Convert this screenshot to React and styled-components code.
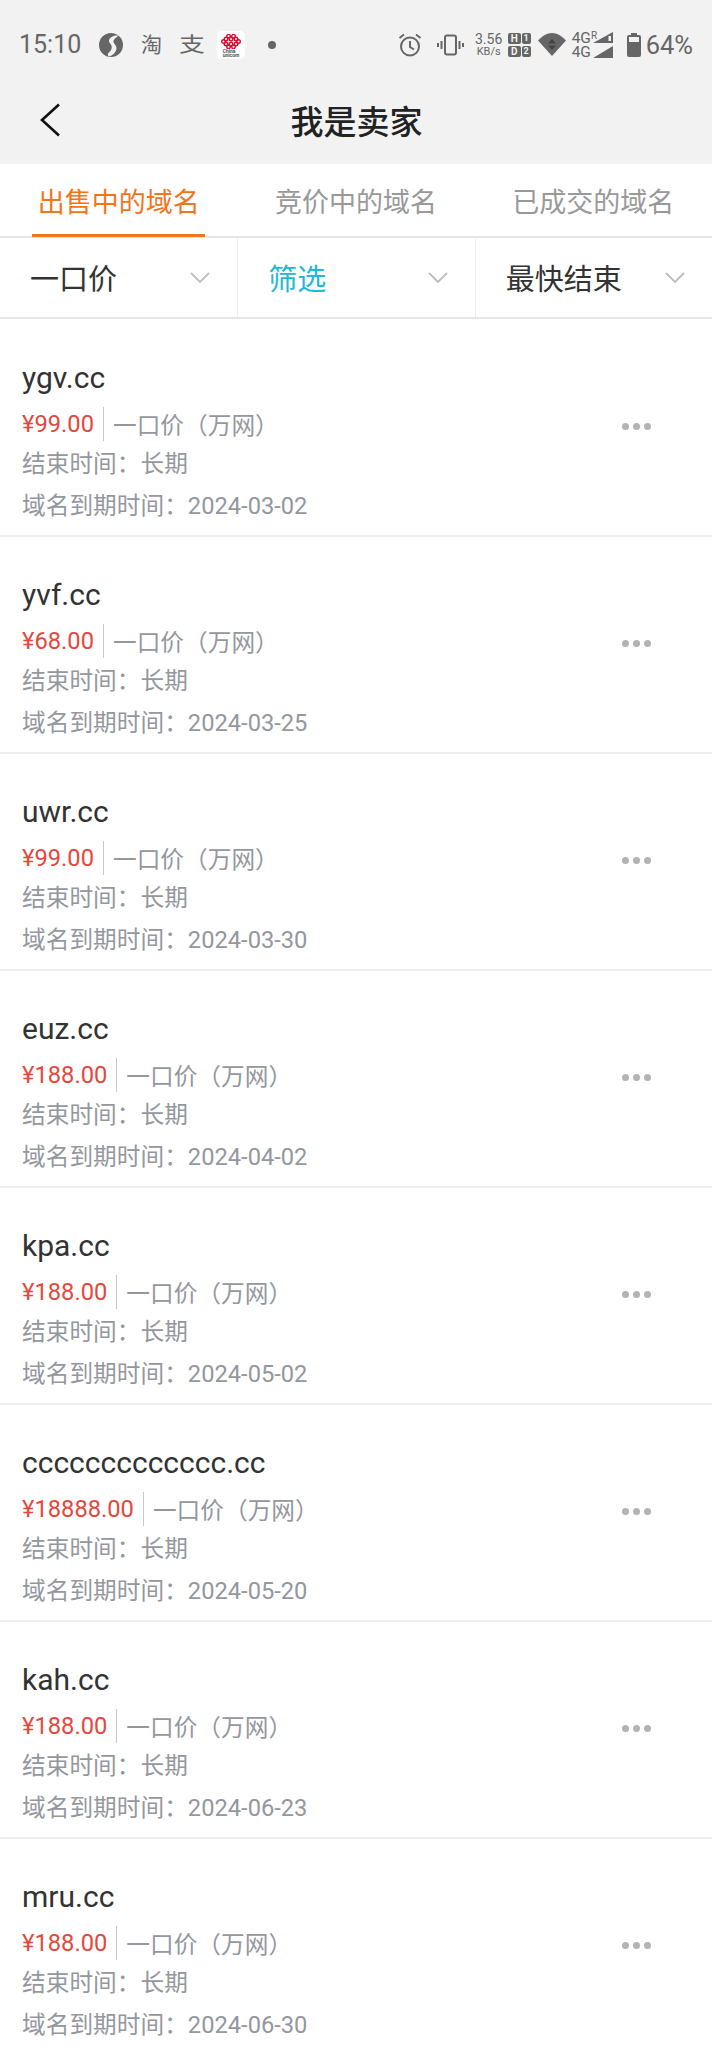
import styled, { createGlobalStyle } from "styled-components";

const domains = [
    { name: "ygv.cc", price: "¥99.00", end: "2024-03-02" },
    { name: "yvf.cc", price: "¥68.00", end: "2024-03-25" },
    { name: "uwr.cc", price: "¥99.00", end: "2024-03-30" },
    { name: "euz.cc", price: "¥188.00", end: "2024-04-02" },
    { name: "kpa.cc", price: "¥188.00", end: "2024-05-02" },
    { name: "ccccccccccccc.cc", price: "¥18888.00", end: "2024-05-20" },
    { name: "kah.cc", price: "¥188.00", end: "2024-06-23" },
    { name: "mru.cc", price: "¥188.00", end: "2024-06-30" },
];

const tabs = ["出售中的域名", "竞价中的域名", "已成交的域名"];

const filters = [
    { label: "一口价", left: 30 },
    { label: "筛选", left: 30, active: true },
    { label: "最快结束", left: 30 },
];

function Unicom() {
    const knots = [
        [7.5, 2.2], [12.5, 2.2],
        [5, 5], [10, 5], [15, 5],
        [2.5, 7.5], [17.5, 7.5],
        [5, 10], [10, 10], [15, 10],
        [7.5, 12.8], [12.5, 12.8],
    ];
    return (
        <UnicomBox>
            <svg width="20" height="15" viewBox="0 0 20 15">
                {knots.map(([x, y]) => (
                    <circle key={x + "-" + y} cx={x} cy={y} r="1.8" fill="none" stroke="#e0082d" strokeWidth="1.4" />
                ))}
            </svg>
            <UnicomText>China<br />unicom</UnicomText>
        </UnicomBox>
    );
}

function StatusBar() {
    return (
        <Status>
            <Time>15:10</Time>
            <IconSlot $left={18}>
                <svg width="24" height="24" viewBox="0 0 24 24">
                    <circle cx="12" cy="12" r="12" fill="#666" />
                    <path d="M20 2.500C15 2 11 4 10 7c-.6 2 1.500 3.500 2.500 5.500 1 2.500-.5 5.500-3 7.500-1 .8-1 2.500.5 3.500 3.500-1 7-4 7.500-8 .3-3-2.500-4.500-3-6.500-.4-2 2-4.500 5.500-6.500z" fill="#f2f2f2" />
                </svg>
            </IconSlot>
            <GlyphIcon $left={18} $size={21}>淘</GlyphIcon>
            <StretchedGlyph $left={17} $size={26}>支</StretchedGlyph>
            <IconSlot $left={12}><Unicom /></IconSlot>
            <Dot />
            <Spacer />
            <svg width="24" height="24" viewBox="0 0 24 24" fill="none" stroke="#666" strokeWidth="2">
                <circle cx="12" cy="13.500" r="9" />
                <path d="M12 8v6l4 2.500M1.500 5L6 1.500M22.500 5L18 1.500" />
            </svg>
            <IconSlot $left={15}>
                <svg width="27" height="22" viewBox="0 0 27 22" fill="none" stroke="#666" strokeWidth="2">
                    <rect x="8" y="1.500" width="11" height="19" rx="2" />
                    <path d="M4.500 7v8M22.500 7v8M1 9v4M26 9v4" />
                </svg>
            </IconSlot>
            <Speed>
                <span>3.56</span>
                <SpeedUnit>KB/s</SpeedUnit>
            </Speed>
            <IconSlot $left={5}>
                <SimGrid>
                    <SimCell $wide>H</SimCell>
                    <SimCell>1</SimCell>
                    <SimCell $wide>D</SimCell>
                    <SimCell>2</SimCell>
                </SimGrid>
            </IconSlot>
            <IconSlot $left={7}>
                <svg width="28" height="23" viewBox="0 0 28 23">
                    <path d="M0 7.500C4 3 9 0 14 0s10 3 14 7.500L14 23z" fill="#666" />
                    <path d="M14 6l-4 4.500h8zM14 17l-4-4.500h8z" fill="#444" />
                </svg>
            </IconSlot>
            <Network>
                <NetLine>4G<NetRoam>R</NetRoam></NetLine>
                <NetLine>4G</NetLine>
                <SignalBars width="22" height="27" viewBox="0 0 22 27">
                    <path d="M21 1v11H1z M19 5h-2.500v5H19z" fill="#666" fillRule="evenodd" />
                    <path d="M21 15v12H1z" fill="#666" />
                </SignalBars>
            </Network>
            <IconSlot $left={13}>
                <svg width="14" height="24" viewBox="0 0 14 24">
                    <path d="M4 0h6v2h2a2 2 0 0 1 2 2v18a2 2 0 0 1-2 2H2a2 2 0 0 1-2-2V4a2 2 0 0 1 2-2h2z" fill="#666" />
                    <rect x="2" y="4" width="10" height="5" fill="#f2f2f2" />
                </svg>
            </IconSlot>
            <Battery>64%</Battery>
        </Status>
    );
}

function App() {
    return (
        <Page>
            <GlobalStyle />
            <Header>
                <StatusBar />
                <Nav>
                    <BackButton>
                        <svg width="22" height="34" viewBox="0 0 22 34" fill="none" stroke="#111" strokeWidth="2.600">
                            <path d="M20 1.500L3 17l17 15.500" />
                        </svg>
                    </BackButton>
                    <Title>我是卖家</Title>
                </Nav>
            </Header>
            <Tabs>
                {tabs.map((tab, i) => (
                    <Tab key={tab} $active={i === 0}>{tab}</Tab>
                ))}
            </Tabs>
            <Filters>
                {filters.map((filter) => (
                    <Filter key={filter.label}>
                        <FilterLabel $active={filter.active} $left={filter.left}>{filter.label}</FilterLabel>
                        <svg width="20" height="12" viewBox="0 0 20 12" fill="none" stroke="#bdbdbd" strokeWidth="1.800">
                            <path d="M1 1l9 9 9-9" />
                        </svg>
                    </Filter>
                ))}
            </Filters>
            <List>
                {domains.map((item) => (
                    <Row key={item.name}>
                        <Info>
                            <DomainName>{item.name}</DomainName>
                            <PriceLine>
                                <Price>{item.price}</Price>
                                <PriceType>一口价（万网）</PriceType>
                            </PriceLine>
                            <Meta>结束时间：长期</Meta>
                            <Meta>域名到期时间：{item.end}</Meta>
                        </Info>
                        <More>
                            <i /><i /><i />
                        </More>
                    </Row>
                ))}
            </List>
        </Page>
    );
}
export default App;

const GlobalStyle = createGlobalStyle`
    html, body {
        margin:0;
        padding:0;
        background-color:#fff;
    }
    * {
        box-sizing:border-box;
    }
`
const Page = styled.div`
    width:712px;
    height:2048px;
    overflow:hidden;
    background-color:#fff;
    font-family:Roboto, "Noto Sans CJK SC", sans-serif;
`
const Header = styled.div`
    height:164px;
    background-color:#f2f2f2;
`
const Status = styled.div`
    height:88px;
    padding:1px 19px 0 19px;
    display:flex;
    align-items:center;
    color:#666;
`
const Time = styled.div`
    font-size:25px;
    width:62px;
`
const IconSlot = styled.div`
    display:flex;
    align-items:center;
    margin-left:${(props) => props.$left}px;
`
const GlyphIcon = styled.div`
    font-size:${(props) => props.$size}px;
    line-height:26px;
    margin-left:${(props) => props.$left}px;
    color:#666;
`
const StretchedGlyph = styled(GlyphIcon)`
    transform:scaleY(0.8);
`
const UnicomBox = styled.div`
    width:28px;
    height:28px;
    padding-top:3px;
    border-radius:5px;
    background-color:#fff;
    display:flex;
    flex-direction:column;
    align-items:center;
    overflow:hidden;
`
const UnicomText = styled.div`
    font-size:5px;
    line-height:4.500px;
    font-weight:700;
    white-space:nowrap;
    color:#555;
`
const Dot = styled.div`
    width:8px;
    height:8px;
    border-radius:50%;
    background-color:#666;
    margin-left:23px;
`
const Spacer = styled.div`
    flex:1;
`
const Speed = styled.div`
    margin-left:11px;
    width:28px;
    display:flex;
    flex-direction:column;
    align-items:center;
    font-size:14px;
    line-height:14px;
`
const SpeedUnit = styled.span`
    font-size:11px;
    line-height:11px;
`
const SimGrid = styled.div`
    display:grid;
    grid-template-columns:13px 9px;
    grid-template-rows:11px 11px;
    gap:2px 1px;
`
const SimCell = styled.div`
    background-color:#666;
    color:#f2f2f2;
    border-radius:2px;
    font-size:${(props) => (props.$wide ? 10 : 9)}px;
    font-weight:700;
    line-height:11px;
    text-align:center;
`
const Network = styled.div`
    position:relative;
    width:42px;
    margin-left:6px;
    display:flex;
    flex-direction:column;
    font-size:15.500px;
    line-height:14px;
`
const NetLine = styled.div`
    display:flex;
    align-items:flex-start;
`
const NetRoam = styled.span`
    font-size:10px;
    line-height:10px;
`
const SignalBars = styled.svg`
    position:absolute;
    right:0;
    top:0;
`
const Battery = styled.div`
    font-size:25.500px;
    margin-left:5px;
`
const Nav = styled.div`
    position:relative;
    height:76px;
    padding-bottom:12px;
    display:flex;
    align-items:center;
    justify-content:center;
`
const BackButton = styled.div`
    position:absolute;
    left:39px;
    top:15px;
    line-height:0;
`
const Title = styled.div`
    font-size:33px;
    font-weight:500;
    color:#222;
    margin-left:1px;
`
const Tabs = styled.div`
    height:74px;
    display:grid;
    grid-template-columns:repeat(3, 1fr);
    border-bottom:2px solid #e6e6e6;
`
const Tab = styled.div`
    position:relative;
    display:flex;
    align-items:center;
    justify-content:center;
    padding-top:1px;
    font-size:27px;
    color:${(props) => (props.$active ? "#f2751a" : "#999")};
    ${(props) => props.$active && `
        &::after {
            content:"";
            position:absolute;
            left:32px;
            right:32px;
            bottom:-1px;
            height:3px;
            background-color:#f2751a;
        }
    `}
`
const Filters = styled.div`
    height:81px;
    display:grid;
    grid-template-columns:repeat(3, 1fr);
    border-bottom:2px solid #e6e6e6;
`
const Filter = styled.div`
    display:flex;
    align-items:center;
    justify-content:space-between;
    padding-right:27px;
    & + & {
        border-left:1px solid #eee;
    }
`
const FilterLabel = styled.span`
    font-size:29px;
    padding-left:${(props) => props.$left}px;
    padding-bottom:2px;
    color:${(props) => (props.$active ? "#1fb8d6" : "#333")};
`
const List = styled.div`
    margin-top:1px;
    display:flex;
    flex-direction:column;
`
const Row = styled.div`
    flex:none;
    height:217px;
    padding:0 61px 0 22px;
    border-bottom:2px solid #eceef0;
    display:flex;
    align-items:center;
    justify-content:space-between;
`
const Info = styled.div`
    align-self:flex-start;
    padding-top:38px;
    display:flex;
    flex-direction:column;
    gap:6px;
`
const DomainName = styled.div`
    font-size:30px;
    line-height:39px;
    color:#333;
`
const PriceLine = styled.div`
    display:flex;
    align-items:center;
    height:35px;
    margin-top:3px;
    margin-bottom:-1px;
`
const Price = styled.span`
    font-size:23.700px;
    color:#e4483c;
    padding-right:9px;
    border-right:1px solid #c8c8c8;
    line-height:34px;
`
const PriceType = styled.span`
    font-size:23.700px;
    color:#94979e;
    padding-left:9px;
`
const Meta = styled.div`
    font-size:23.700px;
    line-height:36px;
    color:#94979e;
`
const More = styled.div`
    display:flex;
    gap:4px;
    margin-bottom:2px;
    i {
        width:7px;
        height:7px;
        border-radius:50%;
        background-color:#b3b3b3;
    }
`
